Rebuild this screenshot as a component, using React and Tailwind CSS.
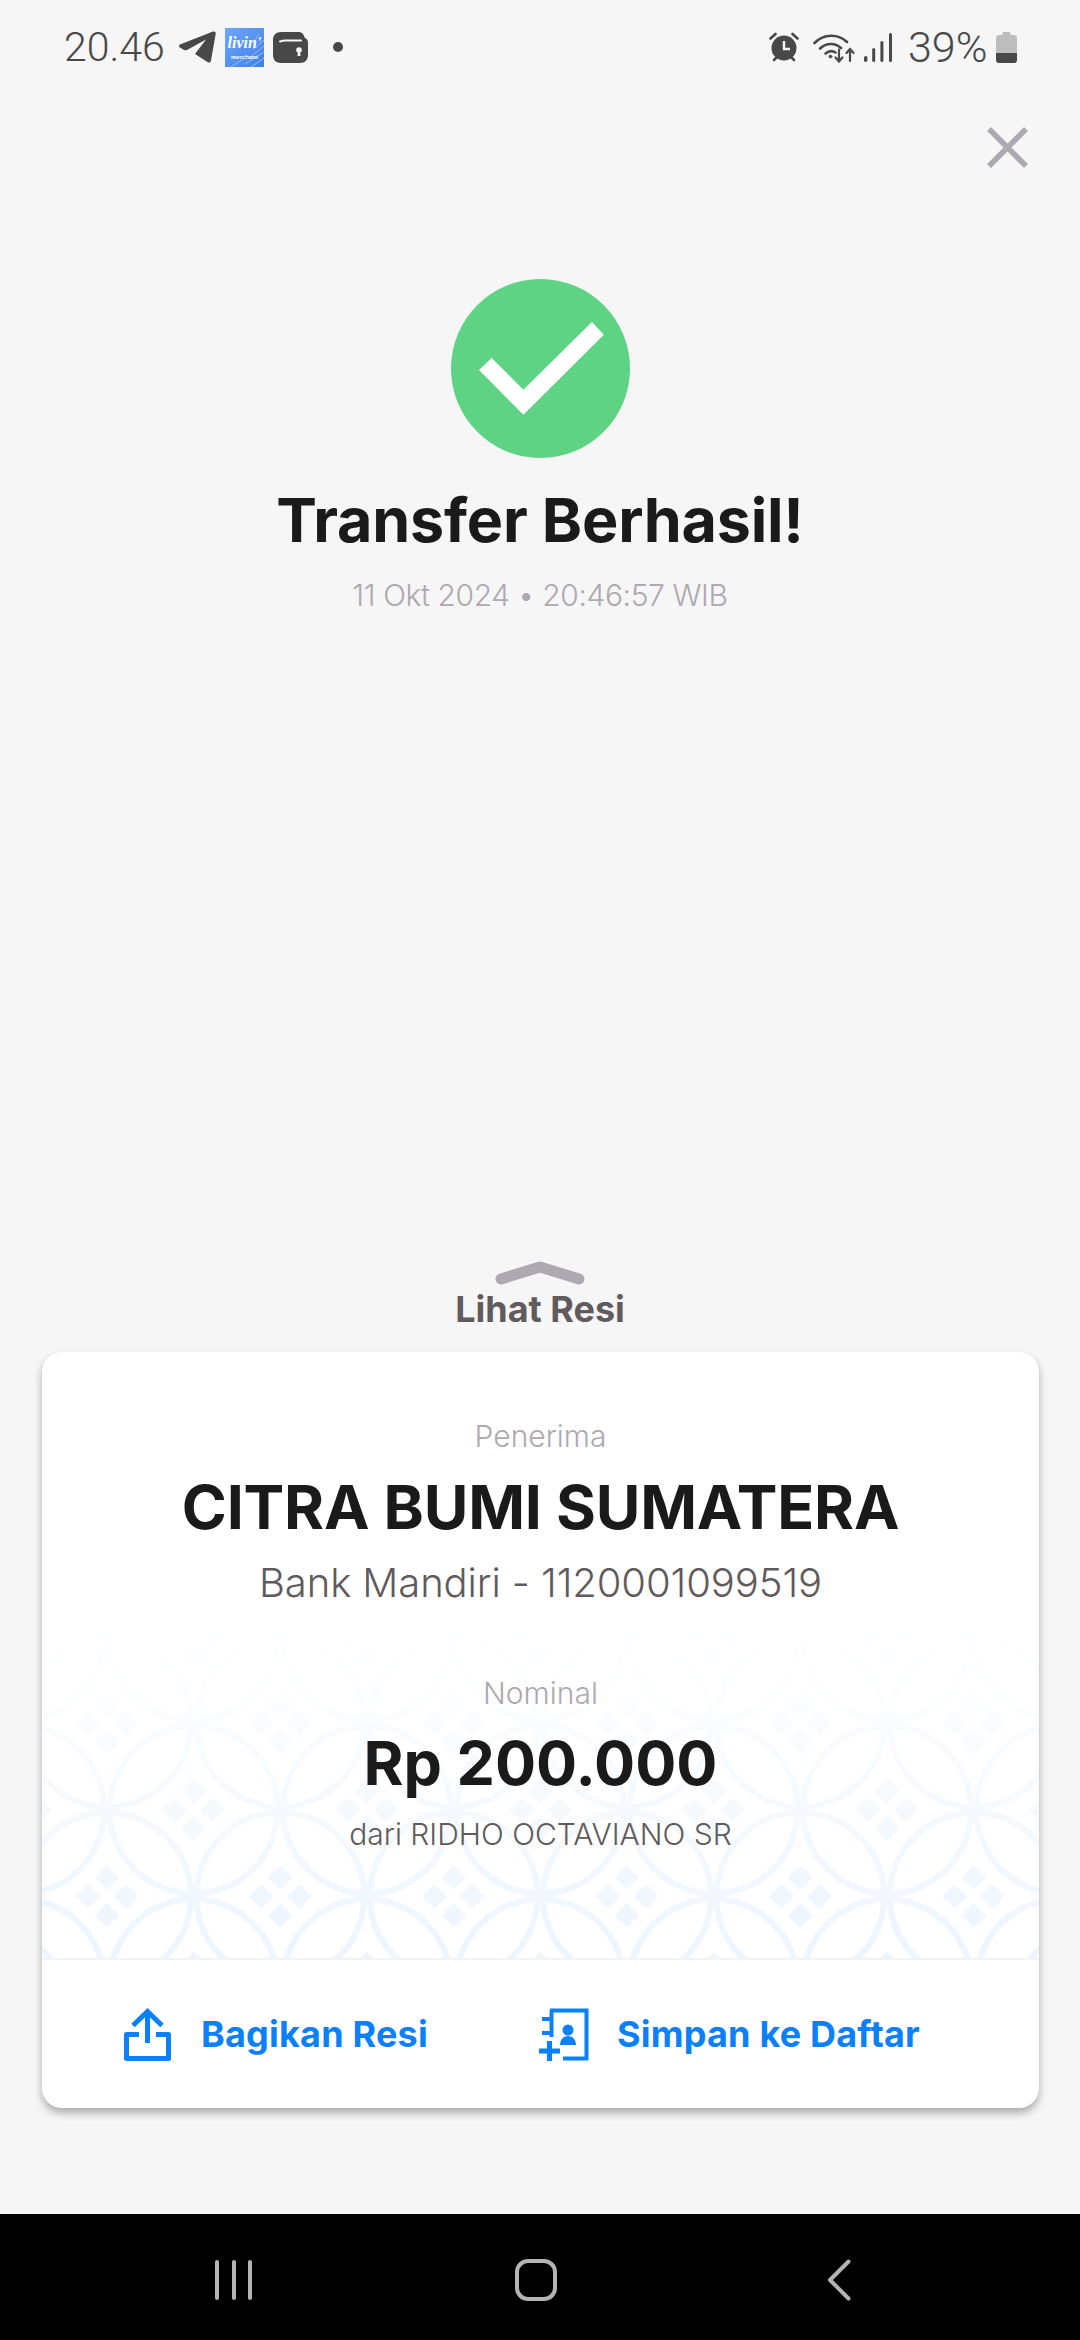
const FONT = "font-['Inter',sans-serif]";

function TelegramIcon() {
  return (
    <svg width="37" height="32" viewBox="0 0 37 32" fill="#484848">
      <path d="M1 13.500 34 .6c1.600-.6 3 .4 2.700 2.200L32 29.500c-.4 2-2 2.600-3.600 1.500L16 23l11-14.500L8 19c-1 .5-2 .4-3-.1L1 16.600c-1.300-.8-1.300-2.500 0-3.100Z" />
    </svg>
  );
}

function WalletIcon() {
  return (
    <svg width="35" height="31" viewBox="0 0 35 31" fill="none">
      <path
        d="M8 0h17c3.500 0 6 2 6.500 5.500C33.800 6.500 35 8.500 35 11v12c0 5-3 8-8 8H8c-5 0-8-3-8-8V8c0-5 3-8 8-8Z"
        fill="#484848"
      />
      <path d="M7 9.500c2-.8 4-1 6-1h15" stroke="#f6f6f6" strokeWidth="2" strokeLinecap="round" />
      <circle cx="26" cy="18" r="2.800" fill="#f6f6f6" />
      <path d="M25 19h2l.5 5h-3Z" fill="#f6f6f6" />
    </svg>
  );
}

function LivinIcon() {
  return (
    <div className="relative w-[39px] h-[39px] overflow-hidden bg-linear-to-br from-[#6ea6fa] to-[#3f7fe8] text-white">
      <svg className="absolute left-0 top-0" width="39" height="39" viewBox="0 0 39 39" fill="none" stroke="#a9c8f8" strokeWidth="0.800">
        <path d="M39 12 28 22M39 18 24 30M39 24 20 36M39 30 26 39M6 39l12-8M34 6l-6 10" />
      </svg>
      <div className="relative flex flex-col items-center">
        <span className="font-['Liberation_Serif',serif] italic font-bold text-[16px] leading-[14px] mt-[8px]">livin'</span>
        <span className="font-['Liberation_Sans',sans-serif] font-bold text-[6px] leading-[6px] mt-[4px]">merchant</span>
      </div>
    </div>
  );
}

function AlarmIcon() {
  return (
    <svg width="30" height="30" viewBox="0 0 30 30" fill="none">
      <circle cx="15" cy="16" r="12.500" fill="#484848" />
      <path d="M1.500 6.500 6.500 2M28.500 6.500 23.500 2" stroke="#484848" strokeWidth="2.600" strokeLinecap="round" />
      <path d="M5 28l3-3M25 28l-3-3" stroke="#484848" strokeWidth="2.600" strokeLinecap="round" />
      <path d="M15 9v8h6" stroke="#f6f6f6" strokeWidth="2.400" />
    </svg>
  );
}

function WifiIcon() {
  return (
    <svg width="42" height="31" viewBox="0 0 42 31" fill="none" stroke="#484848" strokeLinecap="round">
      <path d="M1.500 11C11 1.500 25 1.500 34 10" strokeWidth="2.600" />
      <path d="M7 16.500c6.500-6 15-6 21-.5" strokeWidth="2.600" />
      <path d="M12.500 21.500c3.500-3 7-3 10-1" strokeWidth="2.600" />
      <circle cx="17.500" cy="24.500" r="1.600" fill="#484848" strokeWidth="0.500" />
      <path d="M26 17.500V29M22.500 25.500 26 29.500l3.500-4" strokeWidth="2.200" />
      <path d="M37 29V17.500M33.500 21 37 17l3.500 4" strokeWidth="2.200" />
    </svg>
  );
}

function SignalIcon() {
  return (
    <svg width="28" height="29" viewBox="0 0 28 29" fill="#484848">
      <rect x="0" y="23" width="3.400" height="6" rx="1.700" />
      <rect x="8.200" y="15" width="3" height="14" rx="1.500" />
      <rect x="16.400" y="8" width="3" height="21" rx="1.500" />
      <rect x="25" y="0" width="3" height="29" rx="1.500" />
    </svg>
  );
}

function BatteryIcon() {
  return (
    <svg width="21" height="31" viewBox="0 0 21 31">
      <path d="M6.500 3V1.500C6.500.700 7.200 0 8 0h5c.8 0 1.500.7 1.500 1.500V3H18c1.700 0 3 1.300 3 3v22c0 1.700-1.300 3-3 3H3c-1.700 0-3-1.300-3-3V6c0-1.700 1.300-3 3-3Z" fill="#bdbdbd" />
      <path d="M0 21h21v7c0 1.700-1.300 3-3 3H3c-1.700 0-3-1.300-3-3Z" fill="#484848" />
    </svg>
  );
}

function StatusBar() {
  return (
    <div className="h-[94px] flex items-center justify-between pl-[64px] pr-[63px] text-[#484848] font-['Roboto',sans-serif] font-light text-[41px] leading-[46px]">
      <div className="flex items-center">
        <span className="w-[99px]">20.46</span>
        <div className="ml-[16px]"><TelegramIcon /></div>
        <div className="ml-[9px]"><LivinIcon /></div>
        <div className="ml-[9px]"><WalletIcon /></div>
        <div className="ml-[25px] w-[10px] h-[10px] rounded-full bg-[#484848]" />
      </div>
      <div className="flex items-center">
        <AlarmIcon />
        <div className="ml-[14px]"><WifiIcon /></div>
        <div className="ml-[9px]"><SignalIcon /></div>
        <span className="ml-[16px] w-[81px] text-[43px]">39%</span>
        <div className="ml-[7px]"><BatteryIcon /></div>
      </div>
    </div>
  );
}

// kawung-ish batik background behind the amount
function BatikPattern() {
  const stars = [[0, 0], [173.33, 0], [0, 173.33], [173.33, 173.33], [86.67, 86.67]];
  return (
    <svg className="absolute left-0 bottom-0" width="997" height="333">
      <defs>
        <pattern id="batik" width="173.33" height="173.33" patternUnits="userSpaceOnUse" patternTransform="translate(65 98)">
          {stars.map(([x, y]) => (
            <g key={`${x}-${y}`} transform={`translate(${x} ${y})`}>
              <circle r="84" fill="none" stroke="#edf5fe" strokeWidth="6" />
              <path d="M0-30 11-19 0-8-11-19ZM0 30 11 19 0 8-11 19ZM-30 0-19-11-8 0-19 11ZM30 0 19-11 8 0 19 11Z" fill="#edf5fe" stroke="#edf5fe" strokeWidth="2" strokeLinejoin="round" />
            </g>
          ))}
        </pattern>
      </defs>
      <rect width="997" height="333" fill="url(#batik)" />
    </svg>
  );
}

function ShareIcon() {
  return (
    <svg width="47" height="53" viewBox="0 0 47 53" fill="none" stroke="#0a80fb" strokeWidth="5">
      <path d="M15 26.500H2.500v24h42v-24H32" strokeLinejoin="round" />
      <path d="M23.500 35V4M9 17.500 23.500 3.500 38 17.500" />
    </svg>
  );
}

function SaveListIcon() {
  return (
    <svg width="50" height="53" viewBox="0 0 50 53" fill="none" stroke="#0a80fb" strokeWidth="4">
      <path d="M11 2.500h36.500v48H24" />
      <path d="M12.500 2.500V29" />
      <path d="M3 11h10M3 25h10" />
      <path d="M0 43h21M10.500 33v20" strokeWidth="5" />
      <circle cx="29" cy="22" r="5.500" fill="#0a80fb" stroke="none" />
      <path d="M21 37c0-5 3-9 8-9s8 4 8 9Z" fill="#0a80fb" stroke="none" />
    </svg>
  );
}

function ActionButton({ icon, label, gap, className }) {
  return (
    <div className={`flex items-center ${className}`}>
      {icon}
      <span className="text-[36px] leading-[44px] font-bold tracking-[0.200px] text-[#0a80fb]" style={{ marginLeft: gap }}>
        {label}
      </span>
    </div>
  );
}

function NavBar() {
  return (
    <div className="h-[126px] bg-black flex items-center pt-[6px]">
      <div className="ml-[215px] flex gap-[12.500px]">
        <div className="w-[4px] h-[40px] rounded-full bg-[#b4b4b4]" />
        <div className="w-[4px] h-[40px] rounded-full bg-[#b4b4b4]" />
        <div className="w-[4px] h-[40px] rounded-full bg-[#b4b4b4]" />
      </div>
      <div className="ml-[263px] w-[42px] h-[42px] rounded-[13px] border-[4px] border-[#b4b4b4]" />
      <svg className="ml-[270px]" width="24" height="42" viewBox="0 0 24 42" fill="none" stroke="#b4b4b4" strokeWidth="4" strokeLinecap="round" strokeLinejoin="round">
        <path d="M21.500 2.500 3 21l18.500 18.500" />
      </svg>
    </div>
  );
}

export default function App() {
  return (
    <div className={`w-[1080px] h-[2340px] flex flex-col bg-[#f6f6f6] ${FONT}`}>
      <StatusBar />

      <div className="flex justify-end pr-[52px] mt-[33px]">
        <svg width="41" height="41" viewBox="0 0 41 41" fill="none" stroke="#aea8b0" strokeWidth="5.500">
          <path d="M2 2l37 37M39 2 2 39" />
        </svg>
      </div>

      <div className="flex flex-col items-center mt-[111px]">
        <div className="w-[179px] h-[179px] rounded-full bg-[#5ed384] flex items-center justify-center">
          <svg className="ml-[2px]" width="125" height="93" viewBox="0 0 125 93" fill="#ffffff">
            <path d="M0 48 12.700 36 44.400 67.700 113 0 124.800 12.700 44.400 92.700Z" />
          </svg>
        </div>
        <div className="mt-[26px] text-[61px] leading-[72px] font-bold tracking-[-0.200px] text-[#1a1a1a]">Transfer Berhasil!</div>
        <div className="mt-[19px] text-[30px] leading-[40px] font-light tracking-[-0.400px] text-[#aea8b0]">11 Okt 2024 • 20:46:57 WIB</div>
      </div>

      <div className="flex-1 flex flex-col justify-end items-center pb-[21px]">
        <svg width="90" height="24" viewBox="0 0 90 24" fill="none" stroke="#aea8b0" strokeWidth="11" strokeLinecap="round" strokeLinejoin="round">
          <path d="M6 18 45 6l39 12" />
        </svg>
        <div className="mt-[2px] text-[36px] leading-[44px] font-bold text-[#625b5e]">Lihat Resi</div>
      </div>

      <div className="ml-[42px] w-[997px] h-[756px] rounded-[20px] bg-white shadow-[0_5px_9px_rgba(0,0,0,0.3)] overflow-hidden flex flex-col">
        <div className="relative h-[608px] flex flex-col items-center pt-[64px] border-b-[2px] border-[#f3f3f3]">
          <BatikPattern />
          <div className="absolute left-0 right-0 bottom-0 h-[333px] bg-linear-to-b from-white to-white/0" />
          <div className="relative flex flex-col items-center">
            <div className="text-[30px] leading-[40px] font-light text-[#aea8b0]">Penerima</div>
            <div className="mt-[15px] text-[61px] leading-[72px] font-bold tracking-[-0.200px] text-[#1a1a1a]">CITRA BUMI SUMATERA</div>
            <div className="mt-[16px] text-[40px] leading-[48px] font-light tracking-[-0.100px] text-[#5f5a5c]">Bank Mandiri - 1120001099519</div>
            <div className="mt-[66px] text-[30px] leading-[40px] font-light text-[#aea8b0]">Nominal</div>
            <div className="mt-[14px] text-[61px] leading-[72px] font-bold text-[#1a1a1a]">Rp 200.000</div>
            <div className="mt-[15px] text-[30px] leading-[40px] font-light text-[#5f5a5c]">dari RIDHO OCTAVIANO SR</div>
          </div>
        </div>
        <div className="flex-1 flex items-center">
          <ActionButton icon={<ShareIcon />} label="Bagikan Resi" gap={30} className="ml-[82px]" />
          <ActionButton icon={<SaveListIcon />} label="Simpan ke Daftar" gap={28} className="ml-[111px]" />
        </div>
      </div>

      <div className="h-[106px]" />
      <NavBar />
    </div>
  );
}
